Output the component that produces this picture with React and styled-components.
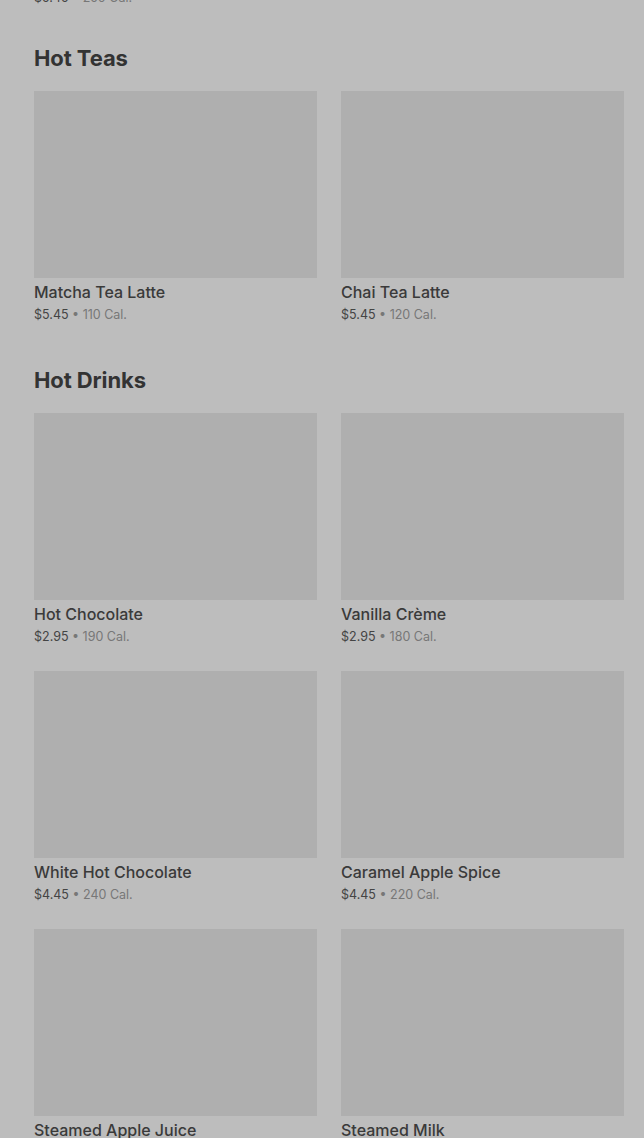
import styled, { createGlobalStyle } from "styled-components";

const GlobalStyle = createGlobalStyle`
  html, body {
    margin: 0;
    padding: 0;
    background: #bdbdbd;
  }
  body {
    font-family: Inter, "Noto Sans", sans-serif;
    overflow: hidden;
  }
`;

const Page = styled.div`
  width: 644px;
  height: 1138px;
  overflow: hidden;
  background: #bdbdbd;
  box-sizing: border-box;
  padding: 0 20px 0 34px;
`;

// the list is scrolled a little: the previous item's price line peeks in at the top
const Scroller = styled.div`
  margin-top: -11px;
  display: flex;
  flex-direction: column;
`;

const Stub = styled.div`
  font-size: 12.5px;
  line-height: 18px;
  color: #444;
  height: 18px;
`;

const Section = styled.section`
  margin-top: 37px;
  & + & {
    margin-top: 42px;
  }
`;

const Heading = styled.h2`
  margin: 0 0 19px;
  font-size: 22px;
  line-height: 28px;
  font-weight: 700;
  letter-spacing: -0.1px;
  color: #333;
`;

const Grid = styled.div`
  display: grid;
  grid-template-columns: 283px 283px;
  column-gap: 24px;
  row-gap: 25px;
`;

const Card = styled.div`
  display: flex;
  flex-direction: column;
`;

const Thumb = styled.div`
  height: 187px;
  background: #afafaf;
`;

const Name = styled.div`
  margin-top: 4px;
  font-size: 16px;
  line-height: 20px;
  font-weight: 500;
  color: #3a3a3a;
`;

const Meta = styled.div`
  margin-top: 4px;
  font-size: 12.5px;
  line-height: 18px;
  color: #444;
`;

const Cal = styled.span`
  color: #777;
`;

const sections = [
  {
    title: "Hot Teas",
    items: [
      { name: "Matcha Tea Latte", price: "$5.45", cal: "110 Cal." },
      { name: "Chai Tea Latte", price: "$5.45", cal: "120 Cal." },
    ],
  },
  {
    title: "Hot Drinks",
    items: [
      { name: "Hot Chocolate", price: "$2.95", cal: "190 Cal." },
      { name: "Vanilla Crème", price: "$2.95", cal: "180 Cal." },
      { name: "White Hot Chocolate", price: "$4.45", cal: "240 Cal." },
      { name: "Caramel Apple Spice", price: "$4.45", cal: "220 Cal." },
      { name: "Steamed Apple Juice", price: "$3.45", cal: "170 Cal." },
      { name: "Steamed Milk", price: "$2.45", cal: "150 Cal." },
    ],
  },
];

const App = () => {
  return (
    <>
      <GlobalStyle />
      <Page>
        <Scroller>
          <Stub>
            $5.45 <Cal>• 250 Cal.</Cal>
          </Stub>
          {sections.map((section) => (
            <Section key={section.title}>
              <Heading>{section.title}</Heading>
              <Grid>
                {section.items.map((item) => (
                  <Card key={item.name}>
                    <Thumb />
                    <Name>{item.name}</Name>
                    <Meta>
                      {item.price} <Cal>• {item.cal}</Cal>
                    </Meta>
                  </Card>
                ))}
              </Grid>
            </Section>
          ))}
        </Scroller>
      </Page>
    </>
  );
};

export default App;
